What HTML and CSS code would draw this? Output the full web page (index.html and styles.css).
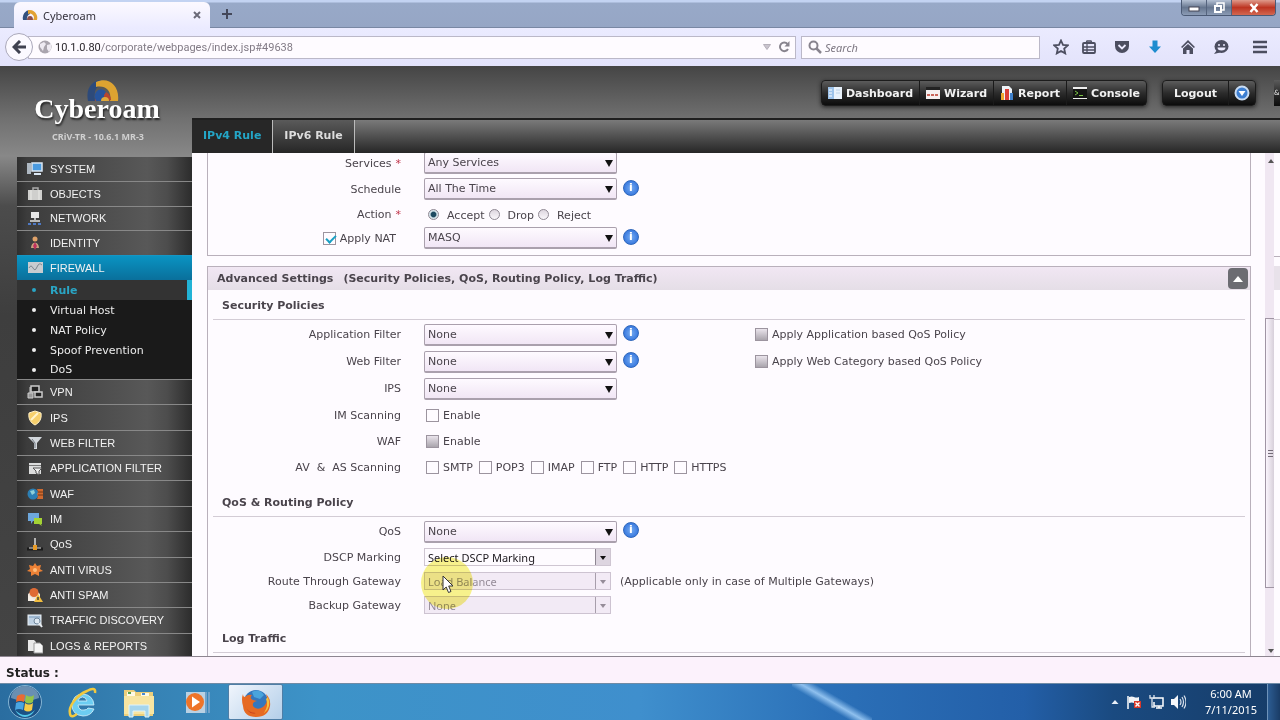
FILE: index.html
```
<!DOCTYPE html>
<html>
<head>
	<meta charset="utf-8">
	<title>Cyberoam</title>
	<link rel="stylesheet" href="styles.css">
</head>
<body>

	<!-- browser -->
	<div class="titlebar">
		<div class="tab">
			<svg width="16" height="12" viewBox="0 0 16 12"><path d="M1 11a7 8 0 0 1 7-10v4a4 5 0 0 0-3 6z" fill="#33507e"/><path d="M6 1a8 8 0 0 1 9 10h-4a4 4 0 0 0-5-6z" fill="#e2a233"/><path d="M5 11a3 4 0 0 1 6 0z" fill="#8d4f4c"/></svg>
			<span class="tab-name">Cyberoam</span>
			<button class="tab-close" aria-label="Close tab"><svg width="8" height="8" viewBox="0 0 8 8"><path d="M1 1l6 6M7 1l-6 6" stroke="#6b6a78" stroke-width="2"/></svg></button>
		</div>
		<button class="tab-new" aria-label="New tab"><svg width="10" height="10" viewBox="0 0 10 10"><path d="M5 0v10M0 5h10" stroke="#44485a" stroke-width="2"/></svg></button>
		<div class="winbtns">
			<button aria-label="Minimize"><svg width="12" height="10" viewBox="0 0 12 10"><rect x="1" y="4" width="10" height="4" fill="#fff" stroke="#445" stroke-width="1"/></svg></button>
			<button aria-label="Restore"><svg width="12" height="12" viewBox="0 0 12 12"><path d="M4 3V1h7v7H9" fill="none" stroke="#fff" stroke-width="1.5"/><rect x="2" y="4" width="6" height="6" fill="none" stroke="#fff" stroke-width="2"/></svg></button>
			<button class="win-close" aria-label="Close"><svg width="10" height="10" viewBox="0 0 10 10"><path d="M1.500 1l7 8M8.500 1l-7 8" stroke="#fff" stroke-width="2.500"/></svg></button>
		</div>
	</div>

	<div class="navbar">
		<button class="back" aria-label="Back"><svg width="14" height="14" viewBox="0 0 14 14"><path d="M8 1L2 7l6 6M2 7h12" fill="none" stroke="#3f4150" stroke-width="3"/></svg></button>
		<div class="urlbar">
			<svg width="14" height="14" viewBox="0 0 14 14"><circle cx="7" cy="7" r="6.500" fill="#aaa5ae"/><path d="M2 4l4-2 2 2-2 3-1 4-3-4zM9 5l4-1v5l-2 3-2-3z" fill="#eeeaf2"/></svg>
			<span class="url"><b>10.1.0.80</b>/corporate/webpages/index.jsp#49638</span>
			<svg class="dropmark" width="8" height="6" viewBox="0 0 8 6"><path d="M0.500 0.500h7L4 5.500z" fill="#c9c4ce" stroke="#b5b0ba"/></svg>
			<svg width="12" height="12" viewBox="0 0 12 12"><path d="M9.500 3A4.300 4.300 0 1 0 10 8" fill="none" stroke="#88848e" stroke-width="2"/><path d="M11.500 0v5.500H6.500z" fill="#88848e"/></svg>
		</div>
		<div class="searchbar">
			<svg width="14" height="14" viewBox="0 0 14 14"><circle cx="5.500" cy="5.500" r="4" fill="none" stroke="#88848e" stroke-width="2"/><path d="M8.500 8.500l4.500 4.500" stroke="#88848e" stroke-width="2.500"/></svg>
			<input type="text" placeholder="Search" aria-label="Search">
		</div>
		<div class="tools">
			<svg width="16" height="16" viewBox="0 0 16 16"><path d="M8 1.500l2 4.400 4.800.500-3.600 3.200 1 4.800L8 12l-4.200 2.400 1-4.800L1.200 6.400 6 5.900z" fill="none" stroke="#4c4e60" stroke-width="1.800"/></svg>
			<svg width="16" height="16" viewBox="0 0 16 16"><rect x="2" y="4" width="12" height="10" rx="1" fill="none" stroke="#4c4e60" stroke-width="1.800"/><path d="M5 4l1-2h4l1 2zM2 8h12M2 11h12M6 5v9" fill="none" stroke="#4c4e60" stroke-width="1.300"/></svg>
			<svg width="16" height="16" viewBox="0 0 16 16"><path d="M1 2h14v5a7 7 0 0 1-14 0z" fill="#4c4e60"/><path d="M4.500 6L8 9.500 11.500 6" fill="none" stroke="#ecebff" stroke-width="1.800"/></svg>
			<svg width="16" height="16" viewBox="0 0 16 16"><path d="M5.500 1.500h5v6H14l-6 6.500-6-6.500h3.500z" fill="#1d8ccf"/></svg>
			<svg width="16" height="16" viewBox="0 0 16 16"><path d="M8 1l7 7-1.200 1L8 3.500 2.200 9 1 8z" fill="#4c4e60"/><path d="M3 9.500L8 5l5 4.500V15H9.500v-4h-3v4H3z" fill="#4c4e60"/></svg>
			<svg width="16" height="16" viewBox="0 0 16 16"><ellipse cx="8.500" cy="7.500" rx="7" ry="6.500" fill="#4c4e60"/><path d="M4 11l-3 4 6-1.500z" fill="#4c4e60"/><circle cx="6" cy="6" r="1" fill="#ecebff"/><circle cx="11" cy="6" r="1" fill="#ecebff"/><path d="M4.500 8.500h8a4 3 0 0 1-8 0z" fill="#ecebff"/></svg>
			<svg class="menu" width="16" height="16" viewBox="0 0 16 16"><path d="M1 3h14M1 8h14M1 13h14" stroke="#4c4e60" stroke-width="2.600"/></svg>
		</div>
	</div>

	<!-- cyberoam page -->
	<div class="page">
		<div class="side">
			<div class="logo">
				<svg width="34" height="26" viewBox="0 0 34 26"><path d="M2 22C-1 8 8 0 17 1l-2 5c-6 2-7 8-6 16z" fill="#2d4a7a"/><path d="M10 3c12-6 24 3 22 19h-8C26 12 20 6 10 8z" fill="#dda331"/><path d="M9 22a8 9 0 0 1 16-1l-3 1a5 5 0 0 0-9 0z" fill="#b5452f"/><path d="M10 22a6 7 0 0 1 10-9l-2 3v6z" fill="#26549d"/><path d="M15 22a4 4 0 0 1 8 0z" fill="#e0a93b"/></svg>
				<div class="brand">Cyberoam</div>
				<div class="version">CRiV-TR - 10.6.1 MR-3</div>
			</div>
			<ul class="nav nav-top">
				<li><a href="#"><svg width="16" height="16" viewBox="0 0 16 16"><path d="M1 2v11M3 2v11" stroke="#d5e2ef" stroke-width="1.500"/><rect x="5" y="2" width="10" height="8" fill="#4b9be0" stroke="#dce8f4" stroke-width="1.500"/><path d="M7 13h7" stroke="#dce8f4" stroke-width="2"/></svg>SYSTEM</a></li>
				<li><a href="#"><svg width="16" height="16" viewBox="0 0 16 16"><path d="M6 4V2h5v2" fill="none" stroke="#aaa" stroke-width="1.500"/><rect x="1" y="4" width="14" height="10" fill="#cfcfcd"/><path d="M4 4v10M12 4v10" stroke="#ecece9"/></svg>OBJECTS</a></li>
				<li><a href="#"><svg width="16" height="16" viewBox="0 0 16 16"><rect x="4" y="2" width="8" height="6" fill="#e6e6e6"/><path d="M7 8h2v2h4v2H3v-2h4z" fill="#b9b9b9"/><path d="M1 14h14" stroke="#4e79c4" stroke-width="2" stroke-dasharray="3 2"/></svg>NETWORK</a></li>
				<li><a href="#"><svg width="16" height="16" viewBox="0 0 16 16"><circle cx="8" cy="4" r="2.500" fill="#e0a269"/><path d="M4 13c0-7 8-7 8 0z" fill="#c9a07e"/><path d="M8 7l2 4-2 4-2-4z" fill="#c0305e"/></svg>IDENTITY</a></li>
				<li class="current"><a href="#"><svg width="16" height="16" viewBox="0 0 16 16"><rect x="1" y="2" width="15" height="11" fill="#c8ccd0"/><path d="M2 8q2-4 4 0t4-1 5-2" fill="none" stroke="#7e8790"/></svg>FIREWALL</a></li>
			</ul>
			<ul class="sub">
				<li class="on"><a href="#">Rule</a></li>
				<li><a href="#">Virtual Host</a></li>
				<li><a href="#">NAT Policy</a></li>
				<li><a href="#">Spoof Prevention</a></li>
				<li><a href="#">DoS</a></li>
			</ul>
			<ul class="nav nav-bottom">
				<li><a href="#"><svg width="16" height="16" viewBox="0 0 16 16"><rect x="4" y="2" width="8" height="6" fill="#222" stroke="#ccc" stroke-width="1.500"/><rect x="8" y="8" width="7" height="5" fill="#222" stroke="#ccc" stroke-width="1.500"/><path d="M1 9h5v5H1zM3 3v6" fill="#999" stroke="#ccc"/></svg>VPN</a></li>
				<li><a href="#"><svg width="16" height="16" viewBox="0 0 16 16"><path d="M8 1l6 2c1 6-2 10-6 12C4 13 1 9 2 3z" fill="#f6cf6b" stroke="#fff0c8"/><path d="M4 10l7-7" stroke="#fff3c9" stroke-width="2"/></svg>IPS</a></li>
				<li><a href="#"><svg width="16" height="16" viewBox="0 0 16 16"><path d="M1 2h14l-5 6v6H7V8z" fill="#d2d7dc"/><path d="M5 4l3 4v5" fill="none" stroke="#737b83"/></svg>WEB FILTER</a></li>
				<li><a href="#"><svg width="16" height="16" viewBox="0 0 16 16"><rect x="2" y="3" width="12" height="11" fill="#dcdddd"/><path d="M2 5.500h12" stroke="#777"/><path d="M6 8h9l-3 3v4l-3-2v-2z" fill="#eee" stroke="#555"/></svg>APPLICATION FILTER</a></li>
				<li><a href="#"><svg width="16" height="16" viewBox="0 0 16 16"><circle cx="6" cy="8" r="5.500" fill="#2c7fb4"/><path d="M3 5l4-1 1 3-3 2z" fill="#8ed0d8"/><path d="M10 3h6v10h-6l1-3-1-2 1-2z" fill="#cf6a30"/><path d="M11 6h5M11 9h5" stroke="#753713"/></svg>WAF</a></li>
				<li><a href="#"><svg width="16" height="16" viewBox="0 0 16 16"><path d="M1 2h11v8H6l-2 3v-3H1z" fill="#6da7dc"/><path d="M7 7h8v6h-1l1 2-3-2H7z" fill="#a4d334"/></svg>IM</a></li>
				<li><a href="#"><svg width="16" height="16" viewBox="0 0 16 16"><path d="M8 2v8" stroke="#ddd" stroke-width="1.500"/><path d="M0 13h16" stroke="#1b1b1b" stroke-width="3"/><path d="M2 12h4M10 12h4" stroke="#ddd"/><rect x="6" y="9" width="4" height="5" fill="#e79a27"/></svg>QoS</a></li>
				<li><a href="#"><svg width="16" height="16" viewBox="0 0 16 16"><path d="M8 1l2 3 4-1-1 4 3 2-4 1v4l-4-2-4 2V10L0 9l3-2-1-4 4 1z" fill="#ec8136"/><circle cx="8" cy="8" r="2" fill="#ffbd7b"/></svg>ANTI VIRUS</a></li>
				<li><a href="#"><svg width="16" height="16" viewBox="0 0 16 16"><path d="M1 7l6-5 6 5v7H1z" fill="#ebe1d6"/><circle cx="7" cy="5.500" r="4.500" fill="#df6b35"/><path d="M1 8l6 4 6-4v6H1z" fill="#f5efe7"/><path d="M11 7l5 8H7z" fill="#f1bd3f"/><path d="M11 10v3" stroke="#443" stroke-width="1.500"/></svg>ANTI SPAM</a></li>
				<li><a href="#"><svg width="16" height="16" viewBox="0 0 16 16"><rect x="1" y="3" width="13" height="10" fill="#bed1e3" stroke="#e9f0f6"/><path d="M2 5h11" stroke="#7d9cbd"/><circle cx="10" cy="9" r="3" fill="#dfe9f2" stroke="#70879c"/><path d="M12 11l3 4" stroke="#e9eef2" stroke-width="2"/></svg>TRAFFIC DISCOVERY</a></li>
				<li><a href="#"><svg width="16" height="16" viewBox="0 0 16 16"><path d="M1 2h6l2 2v9H1z" fill="#e9e9e9"/><path d="M7 5h6l3 3v7H7z" fill="#f6f6f6" stroke="#9a9a9a"/></svg>LOGS &amp; REPORTS</a></li>
			</ul>
		</div>

		<div class="main">
			<div class="header">
				<div class="bar">
					<a href="#"><svg width="14" height="12" viewBox="0 0 14 12"><rect width="14" height="12" fill="#e9f2fb"/><rect width="6" height="12" fill="#9dc3ea"/><path d="M1 3h3M1 6h3M1 9h3" stroke="#fff"/><path d="M8 3h4M8 6h4" stroke="#bcd2e8"/></svg>Dashboard</a>
					<a href="#"><svg width="14" height="12" viewBox="0 0 14 12"><rect width="14" height="12" fill="#f5f0f0"/><rect width="14" height="3" fill="#222"/><path d="M1 8h12" stroke="#c9665b" stroke-width="2" stroke-dasharray="3 1"/></svg>Wizard</a>
					<a href="#"><svg width="14" height="14" viewBox="0 0 14 14"><path d="M2 0h7l3 3v11H2z" fill="#eef3f8"/><rect x="1" y="7" width="3" height="7" fill="#eea72e"/><rect x="5" y="3" width="4" height="11" fill="#dd3f36"/><rect x="10" y="7" width="3" height="7" fill="#3f80ca"/></svg>Report</a>
					<a href="#"><svg width="14" height="12" viewBox="0 0 14 12"><rect width="14" height="12" fill="#151515"/><path d="M0 0h14v2H0zM0 11h14v1H0z" fill="#eee"/><path d="M2 4l3 2-3 2M6 8.500h4" fill="none" stroke="#79c143"/></svg>Console</a>
				</div>
				<div class="bar logout">
					<a href="#">Logout</a>
					<button aria-label="More"><svg width="16" height="16" viewBox="0 0 16 16"><circle cx="8" cy="8" r="6.500" fill="#3d7fd2" stroke="#c9dcf3" stroke-width="2"/><path d="M4.500 6h7L8 11z" fill="#fff"/></svg></button>
				</div>
				<div class="cut">&amp;</div>
			</div>
			<div class="tabs">
				<a href="#" class="active">IPv4 Rule</a>
				<a href="#">IPv6 Rule</a>
			</div>

			<div class="body">
				<form class="content">
					<div class="panel first">
						<div class="row">
							<label for="services" class="tips">Services <i>*</i></label>
							<div><span class="select"><select id="services"><option>Any Services</option></select></span></div>
						</div>
						<div class="row">
							<label for="schedule" class="tips">Schedule</label>
							<div><span class="select"><select id="schedule"><option>All The Time</option></select></span><span class="help"></span></div>
						</div>
						<div class="row short">
							<span class="tips">Action <i>*</i></span>
							<div class="radios">
								<input type="radio" name="action" id="accept" checked><label for="accept">Accept</label>
								<input type="radio" name="action" id="drop"><label for="drop">Drop</label>
								<input type="radio" name="action" id="reject"><label for="reject">Reject</label>
							</div>
						</div>
						<div class="row short">
							<span class="tips nat"><input type="checkbox" id="nat" checked><label for="nat">Apply NAT</label></span>
							<div><span class="select"><select aria-label="NAT policy"><option>MASQ</option></select></span><span class="help"></span></div>
						</div>
					</div>

					<div class="panel">
						<div class="panel-title">
							<span>Advanced Settings</span>
							<span>(Security Policies, QoS, Routing Policy, Log Traffic)</span>
							<button type="button" class="collapse" aria-label="Collapse"></button>
						</div>

						<h3>Security Policies</h3>
						<div class="row tall">
							<label for="app" class="tips">Application Filter</label>
							<div><span class="select"><select id="app"><option>None</option></select></span><span class="help"></span></div>
							<div><input type="checkbox" id="appqos" disabled><label for="appqos">Apply Application based QoS Policy</label></div>
						</div>
						<div class="row tall">
							<label for="web" class="tips">Web Filter</label>
							<div><span class="select"><select id="web"><option>None</option></select></span><span class="help"></span></div>
							<div><input type="checkbox" id="webqos" disabled><label for="webqos">Apply Web Category based QoS Policy</label></div>
						</div>
						<div class="row tall">
							<label for="ips" class="tips">IPS</label>
							<div><span class="select"><select id="ips"><option>None</option></select></span></div>
						</div>
						<div class="row">
							<span class="tips">IM Scanning</span>
							<div class="checks"><input type="checkbox" id="im"><label for="im">Enable</label></div>
						</div>
						<div class="row">
							<span class="tips">WAF</span>
							<div class="checks"><input type="checkbox" id="waf" disabled><label for="waf">Enable</label></div>
						</div>
						<div class="row tall">
							<span class="tips">AV &nbsp;&amp;&nbsp; AS Scanning</span>
							<div class="checks">
								<input type="checkbox" id="smtp"><label for="smtp">SMTP</label>
								<input type="checkbox" id="pop3"><label for="pop3">POP3</label>
								<input type="checkbox" id="imap"><label for="imap">IMAP</label>
								<input type="checkbox" id="ftp"><label for="ftp">FTP</label>
								<input type="checkbox" id="http"><label for="http">HTTP</label>
								<input type="checkbox" id="https"><label for="https">HTTPS</label>
							</div>
						</div>

						<h3>QoS &amp; Routing Policy</h3>
						<div class="row tall">
							<label for="qos" class="tips">QoS</label>
							<div><span class="select"><select id="qos"><option>None</option></select></span><span class="help"></span></div>
						</div>
						<div class="row short">
							<label for="dscp" class="tips">DSCP Marking</label>
							<div><span class="select plain"><select id="dscp"><option>Select DSCP Marking</option></select></span></div>
						</div>
						<div class="row short">
							<label for="route" class="tips">Route Through Gateway</label>
							<div class="note">
								<span class="select plain off"><select id="route" disabled><option>Load Balance</option></select></span>
								<span>(Applicable only in case of Multiple Gateways)</span>
								<span class="spot"></span>
								<svg class="cursor" width="13" height="19" viewBox="0 0 13 19"><path d="M1 1v14l3.200-3 2.300 5.500 2.500-1L6.700 11H11z" fill="#fff" stroke="#333"/></svg>
							</div>
						</div>
						<div class="row short">
							<label for="backup" class="tips">Backup Gateway</label>
							<div><span class="select plain off"><select id="backup" disabled><option>None</option></select></span></div>
						</div>

						<h3>Log Traffic</h3>
						<div class="row tall"></div>
					</div>
				</form>
				<div class="scroll">
					<span class="arrow up"></span>
					<div class="thumb"></div>
					<span class="arrow"></span>
				</div>
				<div class="edge"></div>
			</div>
		</div>
	</div>

	<div class="status">Status :</div>

	<!-- windows taskbar -->
	<div class="taskbar">
		<button aria-label="Start"><svg width="36" height="36" viewBox="0 0 36 36"><circle cx="18" cy="18" r="16.500" fill="#1c5286" stroke="#85b5d4"/><path d="M4 14a14 12 0 0 1 28 0q-14 6-28 0z" fill="#8aa9c4" opacity=".7"/><path d="M8 26q10 10 20 0-4 7-10 7T8 26z" fill="#52c8ea"/><path d="M10 12q4-3 8-1l-1 7q-4-2-8 0z" fill="#ea6b32"/><path d="M19 11q4 3 8 0l-1 7q-4 3-8 0z" fill="#93c548"/><path d="M9 19q4-2 8 0l-1 7q-4-2-8 0z" fill="#4aa5e2"/><path d="M18 19q4 3 8 0l-1 7q-4 3-8 0z" fill="#f7cb46"/></svg></button>
		<button aria-label="Internet Explorer"><svg width="36" height="36" viewBox="0 0 36 36"><path d="M27 21H14q1 6 6 5 3 0 4-2l6 1q-3 7-11 7-11-1-11-11 1-11 11-11 10 1 11 11zM14 17h9q-1-4-4.500-4T14 17z" fill="#6ccdf2" stroke="#d5f2fc" stroke-width=".8"/><path d="M31 9c1-5-3-5-8-2C13 11 4 22 6 30c1 4 4 2 7 0" fill="none" stroke="#f1c940" stroke-width="2.500"/></svg></button>
		<button aria-label="Explorer"><svg width="36" height="36" viewBox="0 0 36 36"><path d="M3 6h10l2 2h17v24H3z" fill="#eccf7b"/><path d="M6 8h8v4H6zM20 9h8v4h-8z" fill="#fdf9e5"/><path d="M7 8h3v2H7z" fill="#55a14f"/><path d="M21 9h3v2h-3z" fill="#4a8bd2"/><path d="M3 12h30v18H3z" fill="#f7e5a2"/><path d="M8 33V21h20v12h-4v-6H12v6z" fill="#a5d5ec" stroke="#dff3fb"/></svg></button>
		<button aria-label="Media Player"><svg width="36" height="36" viewBox="0 0 36 36"><path d="M8 8h19v21H8z" fill="#b9d1e3"/><path d="M28 8v21M31 8v21" stroke="#83abd0" stroke-width="1.500"/><circle cx="17" cy="18" r="9" fill="#ee7429"/><path d="M14 12.500l8 5.500-8 5.500z" fill="#fff"/></svg></button>
		<button class="open" aria-label="Firefox"><svg width="36" height="36" viewBox="0 0 36 36"><circle cx="18" cy="17" r="12" fill="#3577bd"/><path d="M14 7q7-4 12 3l-4 4-6-2z" fill="#49a4dc"/><path d="M5 9q0 3 2 3 3-3 7-2-3 3 1 5l4 1q-5 1-4 5 4 5 10 1 6-5 3-13 5 5 4 12-2 11-14 11T5 21Q3 14 5 9z" fill="#e66a23"/><path d="M30 12q4 10-4 16 5-8 2-14z" fill="#f7c03c"/><path d="M6 19q3 9 12 9-7 3-12-9z" fill="#c53c1c"/></svg></button>
		<div class="tray">
			<svg width="10" height="16" viewBox="0 0 10 16"><path d="M1.500 10h7L5 6z" fill="#e8eff7"/></svg>
			<svg width="16" height="16" viewBox="0 0 16 16"><path d="M2 2v13" stroke="#fff" stroke-width="1.500"/><path d="M3 3q3-1 5 0t5 0v6q-3 1-5 0t-5 0z" fill="#f2f4f7"/><rect x="8" y="7" width="7" height="7" fill="#d93829"/><path d="M9.500 8.500l4 4m0-4l-4 4" stroke="#fff" stroke-width="1.400"/></svg>
			<svg width="16" height="16" viewBox="0 0 16 16"><path d="M5 4h10v8H6V8M8 14h6M11 12v2" fill="none" stroke="#fff" stroke-width="1.500"/><path d="M2 1v3h4V1M4 4v9h3" fill="none" stroke="#dfe6ef" stroke-width="1.300"/></svg>
			<svg width="16" height="16" viewBox="0 0 16 16"><path d="M1 5h3l4-4v14l-4-4H1z" fill="#f6f7fa"/><path d="M10 5q2 3 0 6M12 3q3 5 0 10M14 1.500q4 6.500 0 13" fill="none" stroke="#d6deea" stroke-width="1.200"/></svg>
			<div class="clock">6:00 AM<br>7/11/2015</div>
			<div class="desk"></div>
		</div>
	</div>

</body>
</html>
```
FILE: styles.css
```
*{
	box-sizing: border-box;
	padding: 0;
	margin: 0;
}
body{
	display: flex;
	flex-direction: column;
	height: 100vh;
	overflow: hidden;
	font-family: "DejaVu Sans", sans-serif;
	font-size: 11px;
	color: #4a444c;
	background: #fefbff;
}
button{
	border: 0;
	background: none;
}
a{
	color: inherit;
	text-decoration: none;
}
ul{
	list-style: none;
}
svg{
	flex: none;
	display: block;
}

/* browser */
.titlebar{
	flex: none;
	display: flex;
	height: 28px;
	background: linear-gradient(#c3d3f2 0, #c3d3f2 2px, #98a9c8 3px, #96a6c5);
	border-bottom: 1px solid #7987a3;
}
.tab{
	display: flex;
	align-items: center;
	width: 196px;
	height: 26px;
	margin: 2px 0 0 14px;
	padding: 0 9px 0 8px;
	border-radius: 6px 6px 0 0;
	background: linear-gradient(#fcf9ff, #ebebff);
	font: 11px "Noto Sans", sans-serif;
	color: #35323c;
}
.tab-name{
	margin-left: 5px;
}
.tab-close{
	margin-left: auto;
}
.tab-new{
	margin-left: 12px;
}
.winbtns{
	display: flex;
	width: 95px;
	height: 16px;
	margin: 0 4px 0 auto;
	border: 1px solid #4b5a75;
	border-top: 0;
	border-radius: 0 0 4px 4px;
	overflow: hidden;
}
.winbtns button{
	display: flex;
	align-items: center;
	justify-content: center;
	width: 25px;
	border-right: 1px solid #55647e;
	background: linear-gradient(#b5c1d4, #66768f 50%, #8b9bb5);
}
.winbtns .win-close{
	flex: 1;
	border: 0;
	background: linear-gradient(#df9a8b, #bd3522 50%, #d36750);
}
.navbar{
	flex: none;
	display: flex;
	align-items: center;
	height: 38px;
	padding: 0 12px 0 5px;
	background: linear-gradient(#ebebff, #e3e3fb);
}
.back{
	display: flex;
	align-items: center;
	justify-content: center;
	width: 28px;
	height: 28px;
	z-index: 1;
	border: 1px solid #aaa8ba;
	border-radius: 50%;
	background: #fbf9ff;
}
.urlbar, .searchbar{
	display: flex;
	align-items: center;
	height: 23px;
	border: 1px solid #bbb8c8;
	background: #fefbff;
}
.urlbar{
	flex: 1;
	margin-left: -5px;
	padding: 0 5px 0 9px;
}
.url{
	flex: 1;
	margin-left: 3px;
	font: 11px Roboto, sans-serif;
	color: #827b86;
}
.url b{
	font-weight: normal;
	color: #2a262c;
}
.dropmark{
	margin-right: 7px;
}
.searchbar{
	width: 239px;
	margin-left: 5px;
	padding: 0 6px;
}
.searchbar input{
	flex: 1;
	width: 0;
	margin-left: 3px;
	border: 0;
	outline: none;
	background: none;
	font: italic 11px "Noto Sans", sans-serif;
}
.searchbar input::placeholder{
	color: #7d7782;
}
.tools{
	display: flex;
	gap: 17px;
	margin-left: 13px;
}
.tools .menu{
	margin-left: 6px;
}
.tools svg:first-child{
	margin-right: -5px;
}

/* page */
.page{
	flex: 1;
	display: flex;
	min-height: 0;
	background: linear-gradient(#454545, #707070 52px, #888 90px, #4c4c4c 140px, #3e3e3e 250px, #444);
}
.side{
	flex: none;
	width: 192px;
	padding-left: 17px;
	overflow: hidden;
}
.logo{
	position: relative;
	height: 90px;
	padding-top: 26px;
	text-align: center;
	color: #fff;
}
.logo svg{
	position: absolute;
	left: 69px;
	top: 13px;
}
.brand{
	position: relative;
	width: 160px;
	height: 38px;
	font: bold 28px/34px "Liberation Serif", serif;
	text-shadow: 1px 2px 2px #222;
}
.version{
	width: 162px;
	font: bold 9px/13px "Noto Sans", sans-serif;
	color: #d0d0d0;
}
.nav{
	display: grid;
	grid-auto-rows: 1fr;
}
.nav-top{
	height: 124px;
}
.nav-bottom{
	height: 279px;
}
.nav li{
	border-top: 1px solid #888;
	background: linear-gradient(90deg, #2f2f2f, #3c3c3c 10px, #585858 130px, #4d4d4d 150px, #2c2c2c);
}
.nav a{
	display: flex;
	align-items: center;
	gap: 7px;
	height: 100%;
	padding-left: 10px;
	font: 11px "Liberation Sans", sans-serif;
	color: #f2f2f2;
}
.nav .current{
	border-color: #1596c4;
	background: linear-gradient(#0a93c2, #0a6f9b);
}
.sub{
	height: 99px;
	background: #1a1a1a;
}
.sub li{
	display: flex;
	align-items: center;
	height: 20px;
	font-size: 11px;
	color: #ececec;
}
.sub li:last-child{
	height: 19px;
}
.sub li::before{
	content: "";
	width: 4px;
	height: 4px;
	margin: 0 14px 0 15px;
	border-radius: 50%;
	background: currentColor;
}
.sub .on{
	border-right: 5px solid #22b3d6;
	background: #333;
	font-weight: bold;
	color: #2aa5c4;
}
.main{
	flex: 1;
	display: flex;
	flex-direction: column;
	min-width: 0;
}
.header{
	flex: none;
	display: flex;
	justify-content: flex-end;
	height: 52px;
	padding-top: 14px;
}
.bar{
	display: flex;
	height: 26px;
	border: 1px solid #1c1c1c;
	border-radius: 4px;
	background: linear-gradient(#5c5c5c, #2c2c2c 50%, #0c0c0c);
	box-shadow: 0 1px 4px #222;
	font-weight: bold;
	color: #f1f1f1;
}
.bar a, .bar button{
	display: flex;
	align-items: center;
	gap: 4px;
	padding: 0 6px;
	border-left: 1px solid #1a1a1a;
}
.bar a:first-child{
	border-left: 0;
}
.logout{
	margin: 0 18px 0 15px;
}
.bar.logout a{
	padding: 0 11px;
}
.bar.logout button{
	padding: 0 5px;
}
.cut{
	width: 6px;
	height: 26px;
	background: linear-gradient(#5c5c5c, #2c2c2c 50%, #0c0c0c);
	font-size: 7px;
	line-height: 26px;
	color: #f1f1f1;
}
.tabs{
	flex: none;
	display: flex;
	height: 35px;
	border-top: 2px solid #1f1f1f;
	background: linear-gradient(#7a7a7a, #262626);
	font-weight: bold;
	color: #ddd;
}
.tabs a{
	padding: 0 11px;
	border-right: 1px solid #bbb;
	line-height: 32px;
	background: linear-gradient(#5a5a5a, #262626);
}
.tabs .active{
	background: #272727;
	color: #24a5c6;
}
.body{
	flex: 1;
	display: flex;
	min-height: 0;
	background: #fefbff;
}
.content{
	flex: 1;
	padding: 0 14px 0 15px;
	overflow: hidden;
}
.panel{
	border: 1px solid #b9b0bb;
	margin-bottom: 10px;
}
.first{
	height: 103px;
	border-top: 0;
	overflow: hidden;
}
.first .row:first-child{
	margin-top: -3px;
}
.panel-title{
	display: flex;
	align-items: center;
	gap: 10px;
	height: 23px;
	padding: 0 2px 0 9px;
	background: linear-gradient(#f1e7f3, #e5dee7);
	font-weight: bold;
}
.collapse{
	width: 20px;
	height: 21px;
	margin-left: auto;
	border-radius: 4px;
	background: #6c6c72;
}
.collapse::before{
	content: "";
	display: block;
	margin: 0 auto;
	width: 0;
	border: 5px solid transparent;
	border-top: 0;
	border-bottom: 6px solid #fff;
}
h3{
	height: 30px;
	margin: 6px 5px 1px;
	padding: 8px 9px 0;
	border-bottom: 1px solid #d3ccd5;
	font-size: 11px;
	line-height: 16px;
}
.panel-title + h3{
	margin-top: 0;
}
.row{
	display: grid;
	grid-template-columns: 193px 308px 1fr;
	column-gap: 23px;
	height: 26px;
}
.row > *{
	display: flex;
	align-items: center;
	white-space: nowrap;
}
.short{
	height: 24px;
}
.tall{
	height: 27px;
}
.row .tips{
	justify-content: flex-end;
}
.tips i{
	margin-left: 4px;
	font-style: normal;
	color: #c0334a;
}
.row .nat{
	padding-right: 5px;
}
.select{
	position: relative;
}
.select select{
	display: block;
	width: 193px;
	height: 22px;
	padding-left: 3px;
	border: 1px solid #aaa0ad;
	border-bottom-width: 2px;
	border-radius: 2px;
	appearance: none;
	background: linear-gradient(#fefaff, #f1e6f5);
	font: inherit;
	color: #4a444c;
}
.select::after{
	content: "";
	position: absolute;
	right: 4px;
	top: 8px;
	border: 4px solid transparent;
	border-top: 7px solid #111;
	border-bottom: 0;
	pointer-events: none;
}
.plain select{
	width: 187px;
	height: 18px;
	border: 1px solid #cfc6d2;
	border-radius: 0;
	background: linear-gradient(90deg, transparent 170px, #8e8692 170px, #8e8692 171px, #ddd5e0 171px);
	font: 11px "Noto Sans", sans-serif;
	color: #1c181e;
	opacity: 1;
}
.plain::after{
	right: 5px;
	border-width: 3px;
	border-top-width: 4px;
}
.off select{
	border-color: #cdc3d1;
	background: linear-gradient(90deg, #f2eaf5 170px, #a79eab 170px, #a79eab 171px, #f2eaf5 171px);
	color: #958c98;
}
.off::after{
	border-top-color: #958c98;
}
.help{
	width: 16px;
	height: 16px;
	margin: -3px 0 0 6px;
	border: 1px solid #2f67bb;
	border-radius: 50%;
	background: radial-gradient(#77acf1, #3b7be0 70%);
}
.help::before{
	content: "i";
	display: block;
	font-weight: bold;
	line-height: 14px;
	text-align: center;
	color: #fff;
}
input[type=checkbox]{
	flex: none;
	width: 13px;
	height: 13px;
	margin-right: 4px;
	border: 1px solid #9c949f;
	appearance: none;
	background: #fefbff;
}
input[type=checkbox]:disabled{
	background: linear-gradient(#eae4ec, #a9a4ac);
}
input[type=checkbox]:checked::before{
	content: "";
	display: block;
	width: 8px;
	height: 4px;
	margin: 2px 0 0 2px;
	border: solid #1aa0c4;
	border-width: 0 0 2px 2px;
	transform: rotate(-45deg);
}
.checks{
	padding-left: 2px;
}
.checks label{
	margin-right: 6px;
}
.radios{
	padding-left: 4px;
}
.radios input{
	width: 11px;
	height: 11px;
	border: 1px solid #8f8893;
	border-radius: 50%;
	appearance: none;
	background: linear-gradient(#ddd6df, #faf7fb);
}
.radios input:checked{
	background: radial-gradient(#1d4b61 35%, #d5e4ea 55%);
}
.radios label{
	margin: 3px 4px 0 8px;
}
.note{
	position: relative;
	gap: 9px;
}
.spot{
	position: absolute;
	left: -3px;
	top: -12px;
	width: 52px;
	height: 52px;
	border-radius: 50%;
	background: #f8f58c;
	mix-blend-mode: multiply;
	z-index: 1;
}
.cursor{
	position: absolute;
	left: 18px;
	top: 6px;
	z-index: 2;
}
.scroll{
	flex: none;
	display: flex;
	flex-direction: column;
	justify-content: space-between;
	width: 9px;
	padding: 6px 0 3px;
	background: #f0e7f2;
}
.thumb{
	flex: 1;
	margin: 155px 0 61px;
	border: 1px solid #a095a4;
	border-right: 0;
	background:
		repeating-linear-gradient(#746c78 0 1px, transparent 1px 3px) center / 5px 7px no-repeat,
		linear-gradient(90deg, #fbf5fd, #d7cfda);
}
.arrow{
	align-self: flex-end;
	border: 3px solid transparent;
	border-top: 4px solid #555;
	border-bottom: 0;
}
.up{
	border-top: 0;
	border-bottom: 4px solid #555;
}
.edge{
	flex: none;
	width: 6px;
	background:
		linear-gradient(#b9b0bb, #b9b0bb) 0 103px / 100% 1px no-repeat,
		linear-gradient(#e8e2ea, #e8e2ea) 0 113px / 100% 24px no-repeat,
		linear-gradient(#d3ccd5, #d3ccd5) 0 166px / 100% 1px no-repeat;
}
.status{
	flex: none;
	height: 27px;
	padding-left: 6px;
	border-top: 1px solid #8d8590;
	background: #fcf2fc;
	font-size: 12px;
	font-weight: bold;
	line-height: 32px;
	color: #222;
}

/* taskbar */
.taskbar{
	flex: none;
	display: flex;
	height: 37px;
	padding-left: 7px;
	border-top: 1px solid #6f8ba6;
	background:
		linear-gradient(30deg, transparent 40%, #8fc0ee 50%, transparent 60%) 66% 0 / 80px 36px no-repeat,
		linear-gradient(90deg, #2a6da0, #3580b2 10%, #3d93c8 25%, #3f8fcd 50%, #2b70b8 65%, #235fa8 80%, #1a4a80 87%, #163c68);
}
.taskbar button{
	width: 36px;
	margin-right: 21px;
}
.taskbar .open{
	display: flex;
	justify-content: center;
	width: 55px;
	margin-left: -7px;
	border: 1px solid #4f7ea6;
	border-radius: 2px;
	background: linear-gradient(135deg, #f0f5fc, #b4cfe9);
}
.tray{
	display: flex;
	align-items: center;
	gap: 6px;
	margin-left: auto;
}
.clock{
	width: 60px;
	margin-left: 9px;
	font: 11px/16px "Noto Sans", sans-serif;
	text-align: center;
	color: #fff;
}
.desk{
	align-self: stretch;
	width: 13px;
	border-left: 1px solid #6e93ba;
	background: linear-gradient(90deg, #2c5c92, #1a3c66);
}
```
